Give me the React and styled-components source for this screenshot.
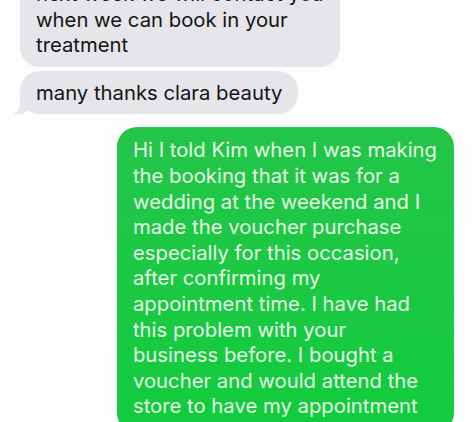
import React from 'react';
import styled, { createGlobalStyle } from 'styled-components';

const GlobalStyle = createGlobalStyle`
    html, body {
        margin: 0;
        padding: 0;
        background: #fdfdfd;
        overflow: hidden;
    }
`;

const Thread = styled.div`
    display: flex;
    flex-direction: column;
    gap: 4px;
    margin-top: -28px;
    padding: 0 20px;
    font-family: 'Inter', 'Liberation Sans', Arial, sans-serif;
    font-size: 20.3px;
    line-height: 25.6px;
`;

const Bubble = styled.div`
    position: relative;
    align-self: ${(p) => (p.$mine ? 'flex-end' : 'flex-start')};
    margin-right: ${(p) => (p.$mine ? '1px' : '0')};
    margin-top: ${(p) => (p.$mine ? '9px' : '0')};
    padding: ${(p) => (p.$mine ? '10px 17px 14px 16px' : '9px 16px 9px 16px')};
    border-radius: 20px;
    background: ${(p) => (p.$mine ? 'linear-gradient(#24c549, #12cc3d)' : '#e5e5ea')};
    color: ${(p) => (p.$mine ? '#e6f7e6' : '#141414')};
    white-space: nowrap;

    ${(p) =>
        p.$tail &&
        `
        &::before {
            content: '';
            position: absolute;
            bottom: 0;
            left: -7px;
            width: 20px;
            height: 18px;
            background: #e5e5ea;
            border-bottom-right-radius: 14px;
        }
        &::after {
            content: '';
            position: absolute;
            bottom: 0;
            left: -10px;
            width: 10px;
            height: 18px;
            background: #fdfdfd;
            border-bottom-right-radius: 9px;
        }
    `}
`;

const Line = styled.span`
    display: block;
`;

const theirs = [
    ['next week we will contact you', 'when we can book in your', 'treatment'],
    ['many thanks clara beauty'],
];

const mine = [
    'Hi I told Kim when I was making',
    'the booking that it was for a',
    'wedding at the weekend and I',
    'made the voucher purchase',
    'especially for this occasion,',
    'after confirming my',
    'appointment time. I have had',
    'this problem with your',
    'business before. I bought a',
    'voucher and would attend the',
    'store to have my appointment',
];

const App = () => {
    return (
        <>
            <GlobalStyle />
            <Thread>
                {theirs.map((lines, i) => (
                    <Bubble key={i} $tail={i === theirs.length - 1}>
                        {lines.map((l) => (
                            <Line key={l}>{l}</Line>
                        ))}
                    </Bubble>
                ))}
                <Bubble $mine>
                    {mine.map((l) => (
                        <Line key={l}>{l}</Line>
                    ))}
                </Bubble>
            </Thread>
        </>
    );
};

export default App;
